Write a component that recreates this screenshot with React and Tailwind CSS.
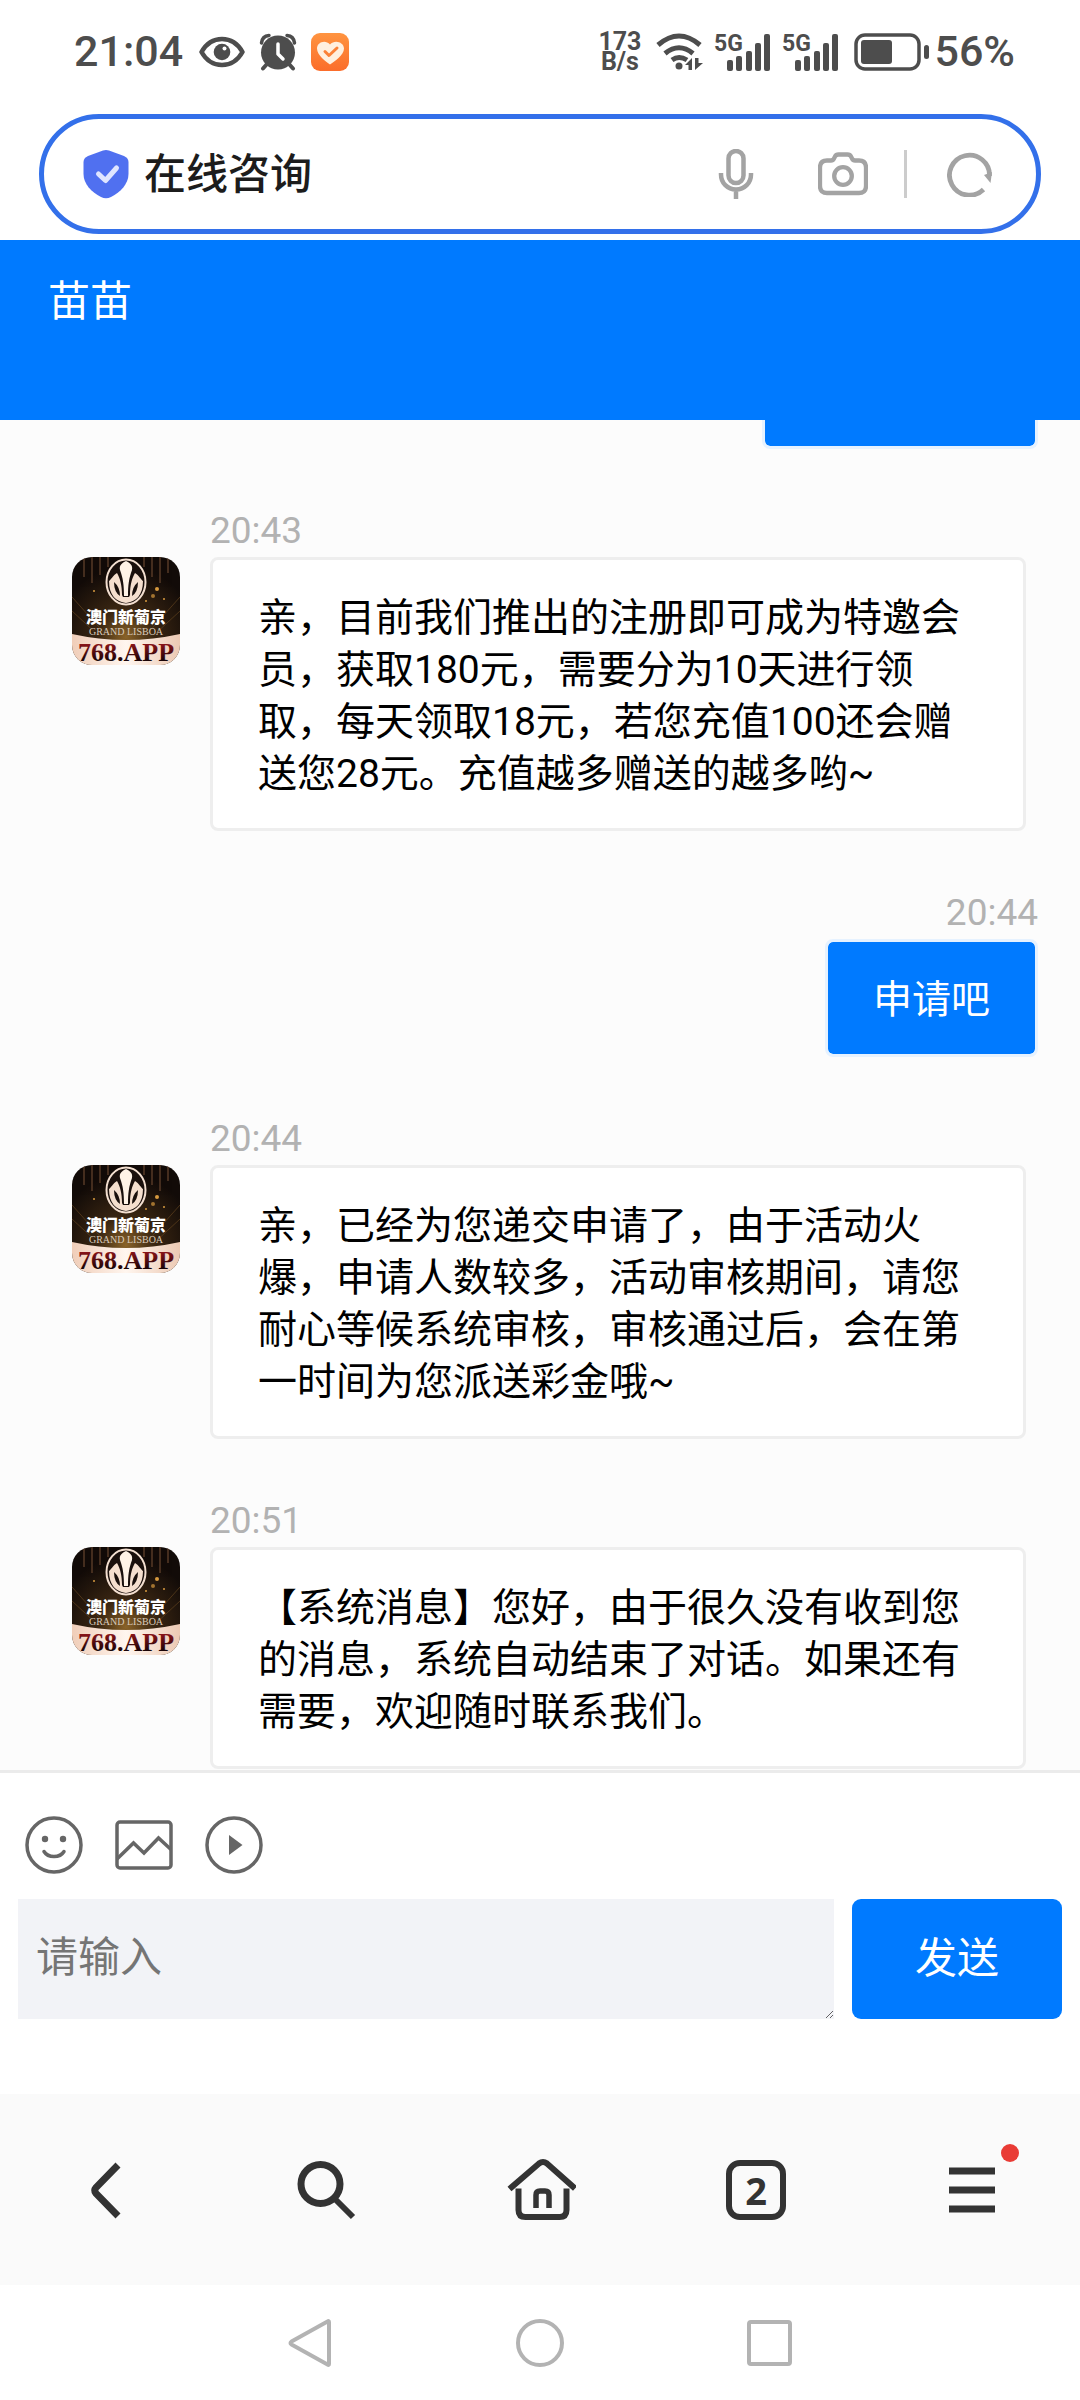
const messages = [
  {
    id: 1,
    from: 'agent',
    time: '20:43',
    text: '亲，目前我们推出的注册即可成为特邀会员，获取180元，需要分为10天进行领取，每天领取18元，若您充值100还会赠送您28元。充值越多赠送的越多哟~',
  },
  { id: 2, from: 'me', time: '20:44', text: '申请吧' },
  {
    id: 3,
    from: 'agent',
    time: '20:44',
    text: '亲，已经为您递交申请了，由于活动火爆，申请人数较多，活动审核期间，请您耐心等候系统审核，审核通过后，会在第一时间为您派送彩金哦~',
  },
  {
    id: 4,
    from: 'agent',
    time: '20:51',
    text: '【系统消息】您好，由于很久没有收到您的消息，系统自动结束了对话。如果还有需要，欢迎随时联系我们。',
  },
];

const Signal = () => (
  <svg viewBox="0 0 58 40" className="h-10 w-[58px] overflow-visible" fill="currentColor">
    <text x="0" y="19" fontSize="23" fontWeight="700" fontFamily="Roboto, sans-serif">5G</text>
    <rect x="13" y="28" width="6" height="11" rx="2" />
    <rect x="22" y="24" width="6" height="15" rx="2" />
    <rect x="32" y="19" width="6" height="20" rx="2" />
    <rect x="41" y="11" width="6" height="28" rx="2" />
    <rect x="50" y="2" width="6" height="37" rx="2" />
  </svg>
);

const StatusBar = () => (
  <div className="flex h-[102px] items-center justify-between pt-px pr-[65px] pl-[74px] text-[43px] font-medium text-[#4d4d4d]">
    <div className="flex items-center">
      <span>21:04</span>
      <svg viewBox="0 0 46 32" className="ml-4 h-8 w-[46px]">
        <path d="M2.500 16C7 8 14 3 23 3s16 5 20.500 13C39 24 32 29 23 29S7 24 2.500 16Z" fill="none" stroke="currentColor" strokeWidth="4.500" strokeLinejoin="round" />
        <circle cx="23" cy="16" r="8.300" fill="currentColor" />
        <circle cx="25.500" cy="12.500" r="2" fill="#fff" />
      </svg>
      <svg viewBox="0 0 38 38" className="ml-[14px] h-[38px] w-[38px]" fill="none" stroke="currentColor">
        <circle cx="19" cy="19.500" r="17" fill="currentColor" stroke="none" />
        <path d="M2.500 10C3 5.500 6 2.800 10 2.500M35.500 10C35 5.500 32 2.800 28 2.500" strokeWidth="3.500" strokeLinecap="round" />
        <path d="M8 31l-4 4.500M30 31l4 4.500" strokeWidth="4" strokeLinecap="round" />
        <path d="M19 11v10l5 5" stroke="#fff" strokeWidth="3.500" strokeLinecap="round" strokeLinejoin="round" />
      </svg>
      <svg viewBox="0 0 38 38" className="ml-[14px] h-[38px] w-[38px]">
        <defs>
          <linearGradient id="health" x1="0" y1="0" x2="0" y2="1">
            <stop offset="0" stopColor="#ff9440" />
            <stop offset="1" stopColor="#fb6d2b" />
          </linearGradient>
        </defs>
        <rect width="38" height="38" rx="9" fill="url(#health)" />
        <path d="M19 31.500C15 29 6 22 6 15.500 6 9 14.500 6 19 11.500 23.500 6 33 9 33 15.500 33 22 23 29 19 31.500Z" fill="#fff0df" />
        <path d="M14 18.500l4 4 8-7.500" fill="none" stroke="#fb8238" strokeWidth="3" strokeLinecap="round" strokeLinejoin="round" />
      </svg>
    </div>
    <div className="flex items-center">
      <div className="text-center text-[25px] leading-5 font-bold">
        <div>173</div>
        <div>B/s</div>
      </div>
      <svg viewBox="0 0 48 40" className="ml-[15px] h-10 w-12" fill="none" stroke="currentColor" strokeWidth="5">
        <path d="M2 13Q23-5 44 13M9 21.500Q23 10 37 21.500M16 28Q23 23 31 28" />
        <circle cx="23" cy="34" r="3.500" fill="currentColor" stroke="none" />
        <path d="M36 26v12h-3.500v-5H29zM39 38V26h3.500v5H47z" fill="currentColor" stroke="none" />
      </svg>
      <span className="ml-[10px]"><Signal /></span>
      <span className="ml-[10px]"><Signal /></span>
      <svg viewBox="0 0 76 38" className="ml-[14px] h-[38px] w-[76px]" fill="currentColor">
        <rect x="2" y="2" width="63" height="34" rx="9" fill="none" stroke="currentColor" strokeWidth="3.500" />
        <rect x="7" y="7" width="31" height="24" rx="3" />
        <rect x="70" y="12" width="5" height="14" rx="2.500" />
      </svg>
      <span className="ml-[4px]">56%</span>
    </div>
  </div>
);

const AddressBar = () => (
  <div className="mx-[39px] mt-3 mb-[6px] flex h-[120px] items-center rounded-full border-[5px] border-[#3370ea] bg-white pr-[43px] pl-[39px]">
    <svg viewBox="0 0 46 50" className="h-[50px] w-[46px]">
      <path d="M20 1.500q3-1 6 0L41 7q4.500 2 4.500 6v12c0 10-8 18-17.500 23q-5 2.500-10 0C8.500 43 .500 35 .500 25V13q0-4 4.500-6Z" fill="#5070f0" />
      <path d="M15.500 25l7 6.500L33.500 19" fill="none" stroke="#dfe5ff" strokeWidth="5" strokeLinecap="round" strokeLinejoin="round" />
    </svg>
    <span className="ml-[15px] flex-1 text-[42px] font-medium text-[#1c1c1c]">在线咨询</span>
    <div className="flex items-center text-[#a3a3a3]">
      <button type="button" aria-label="语音">
        <svg viewBox="0 0 36 50" className="h-[50px] w-9" fill="none" stroke="currentColor" strokeWidth="4.500">
          <rect x="10.500" y="2" width="15" height="32" rx="7.500" />
          <path d="M3 24v1.500C3 34 9.500 40.500 18 40.500S33 34 33 25.500V24M18 40v10" />
        </svg>
      </button>
      <button type="button" aria-label="拍照" className="ml-16">
        <svg viewBox="0 0 50 44" className="h-11 w-[50px]" fill="none" stroke="currentColor" strokeWidth="4.300" strokeLinejoin="round">
          <path d="M9 8.500h4q2 0 3-2l1-2q1-2 3.500-2h9q2.500 0 3.500 2l1 2q1 2 3 2h4q7 0 7 7V34q0 7-7 7H9q-7 0-7-7V15.500q0-7 7-7Z" />
          <circle cx="25" cy="24" r="8.800" />
        </svg>
      </button>
      <span className="ml-9 h-12 w-[3px] bg-[#cccccc]" />
      <button type="button" aria-label="刷新" className="ml-10">
        <svg viewBox="0 0 46 46" className="h-[46px] w-[46px]" fill="none" stroke="currentColor" strokeWidth="4.800">
          <path d="M36.500 38.500A20 20 0 1 1 42.500 25" />
          <path d="M37 24l8-3-1.500 11Z" fill="currentColor" stroke="none" />
        </svg>
      </button>
    </div>
  </div>
);

const Avatar = () => (
  <svg viewBox="0 0 108 108" className="h-[108px] w-[108px] shrink-0 rounded-[20px]">
    <defs>
      <radialGradient id="glow" cx=".5" cy=".74" r=".65">
        <stop offset="0" stopColor="#8a6329" />
        <stop offset=".4" stopColor="#3a2612" />
        <stop offset="1" stopColor="#120b08" />
      </radialGradient>
      <linearGradient id="red" x1="0" y1="0" x2="0" y2="1">
        <stop offset=".2" stopColor="#8a1418" />
        <stop offset=".8" stopColor="#160305" />
      </linearGradient>
      <linearGradient id="base" x1="0" x2="1">
        <stop offset="0" stopColor="#f0cdb8" />
        <stop offset=".5" stopColor="#fff6ef" />
        <stop offset="1" stopColor="#ecc9b3" />
      </linearGradient>
    </defs>
    <rect width="108" height="108" fill="url(#glow)" />
    <path d="M12 0v20M20 0v26M28 0v18M36 0v10M72 0v10M80 0v20M88 0v26M96 0v16" stroke="#5a3c28" strokeWidth="2" opacity=".7" />
    <path d="M0 40l34 38M0 54l26 24M108 40L74 78M108 54L82 78" stroke="#6b4a22" strokeWidth="1" opacity=".6" />
    <g fill="#d79a3f">
      <circle cx="85" cy="32" r="2" />
      <circle cx="81" cy="39" r="2" opacity=".7" />
      <circle cx="92" cy="42" r="1" />
      <circle cx="22" cy="34" r="1" />
      <circle cx="36" cy="30" r="1" />
      <circle cx="74" cy="44" r="1" />
    </g>
    <ellipse cx="54" cy="25" rx="19.500" ry="22.500" fill="#1a100c" stroke="#f3dfd0" strokeWidth="2" />
    {/* lotus */}
    <path d="M37 24c2-1 4-6 8-8 3 5 5 12 5 22l1 2h6l1-2c0-10 2-17 5-22 4 2 6 7 8 8 0 14-7 21-17 22-10-1-17-8-17-22Z" fill="#f5dfce" />
    <path d="M54 4c4 2 7 4 6 9-3 8-4 15-4 26h-4c0-11-1-18-4-26-1-5 2-7 6-9Z" fill="#fff3e6" />
    <path d="M42 25q6 5 6 14-6-4-6-14ZM66 25q-6 5-6 14 6-4 6-14Z" fill="#1a100c" />
    <path d="M0 77q54 12 108 0v31H0Z" fill="url(#base)" />
    <text x="54" y="65.500" textAnchor="middle" fontSize="16" fontWeight="900" fill="#fff" fontFamily="'Noto Sans CJK SC', sans-serif">澳门新葡京</text>
    <text x="54" y="77.500" textAnchor="middle" fontSize="10" fill="#d9cbbb" fontFamily="'Liberation Serif', serif">GRAND LISBOA</text>
    <text x="54" y="104" textAnchor="middle" fontSize="26" fontWeight="700" fill="url(#red)" fontFamily="'Liberation Serif', serif">768.APP</text>
  </svg>
);

const Message = ({ from, time, text }) => {
  if (from === 'me') {
    return (
      <div className="flex flex-col items-end pr-[42px]">
        <time className="pt-[6px] text-[37px] leading-[52px] text-[#b2b2b2]">{time}</time>
        <p className="rounded-lg border-[3px] border-[#e6f2ff] bg-[#007aff] bg-clip-padding px-[45px] pt-8 pb-7 text-[39px] leading-[52px] text-white">{text}</p>
      </div>
    );
  }
  return (
    <div className="pr-[54px] pl-[72px]">
      <time className="block pt-[6px] pl-[138px] text-[37px] leading-[52px] text-[#b2b2b2]">{time}</time>
      <div className="flex items-start gap-[30px]">
        <Avatar />
        <p className="flex-1 rounded-lg border-[3px] border-[#eeeeee] bg-white px-[45px] pt-8 pb-7 text-[39px] leading-[52px] text-black">{text}</p>
      </div>
    </div>
  );
};

const Composer = () => (
  <form className="border-t-[3px] border-[#ebebeb] bg-white px-[18px] pt-[43px] pb-[75px]" onSubmit={(e) => e.preventDefault()}>
    <div className="mb-[25px] flex gap-8 pl-[7px] text-[#666666]">
      <button type="button" aria-label="表情">
        <svg viewBox="0 0 58 58" className="h-[58px] w-[58px]" fill="none" stroke="currentColor" strokeWidth="3.500">
          <circle cx="29" cy="29" r="27" />
          <path d="M19 35.500Q22 40.500 29 40.500T39 35.500" strokeLinecap="round" />
          <g fill="currentColor" stroke="none">
            <circle cx="20" cy="23" r="3.200" />
            <circle cx="38" cy="23" r="3.200" />
          </g>
        </svg>
      </button>
      <button type="button" aria-label="图片">
        <svg viewBox="0 0 58 58" className="h-[58px] w-[58px]" fill="none" stroke="currentColor" strokeWidth="3.500">
          <rect x="2" y="6" width="54" height="46" rx="3" />
          <path d="M2 43l16.500-16L29 37l14.500-15L56 33.500" />
        </svg>
      </button>
      <button type="button" aria-label="视频">
        <svg viewBox="0 0 58 58" className="h-[58px] w-[58px]" fill="none" stroke="currentColor" strokeWidth="3.500">
          <circle cx="29" cy="29" r="27" />
          <path d="M24 19v20l13.500-10Z" fill="currentColor" stroke="none" />
        </svg>
      </button>
    </div>
    <div className="flex items-start gap-[18px]">
      <textarea
        aria-label="请输入"
        placeholder="请输入"
        className="h-[120px] min-w-0 flex-1 bg-[#f2f3f7] px-[18px] pt-[29px] pb-6 text-[42px] leading-[60px] outline-none placeholder:text-[#757575]"
      />
      <button type="submit" className="h-[120px] w-[210px] rounded-[9px] bg-[#007aff] pb-px text-[42px] leading-[60px] text-white">
        发送
      </button>
    </div>
  </form>
);

const BrowserNav = () => (
  <nav className="grid h-[191px] grid-cols-5 place-items-center bg-[#fafafa] text-[#333333]">
    <button type="button" aria-label="后退">
      <svg viewBox="0 0 72 72" className="h-[72px] w-[72px]" fill="none" stroke="currentColor" strokeWidth="7">
        <path d="M46 11L24 33.500Q21.500 36.500 24 39.500L46 62" />
      </svg>
    </button>
    <button type="button" aria-label="搜索">
      <svg viewBox="0 0 72 72" className="h-[72px] w-[72px]" fill="none" stroke="currentColor">
        <circle cx="32.500" cy="30" r="19.500" strokeWidth="7" />
        <path d="M46 44l19 19" strokeWidth="6" />
      </svg>
    </button>
    <button type="button" aria-label="主页">
      <svg viewBox="0 0 72 72" className="h-[72px] w-[72px]" fill="none" stroke="currentColor" strokeWidth="6">
        <path d="M5.500 35L35 9.500q4-3 8 0L71 34.500" />
        <path d="M14.500 34.500V56q0 7 7 7h34q7 0 7-7V34.500" />
        <path d="M32 54V41q0-4 4-4h5q4 0 4 4v13" strokeWidth="5.500" />
      </svg>
    </button>
    <button type="button" aria-label="标签页" className="flex h-[60px] w-[60px] items-center justify-center rounded-[14px] border-6 border-[#333333] font-['Open_Sans'] text-[38px] leading-none font-bold">
      2
    </button>
    <button type="button" aria-label="菜单" className="relative">
      <svg viewBox="0 0 46 72" className="h-[72px] w-[46px]" fill="currentColor">
        <path d="M0 13.500h46v7H0zM0 32.500h46v7H0zM0 51.500h46v7H0z" />
      </svg>
      <span className="absolute -top-[10px] -right-6 h-[18px] w-[18px] rounded-full bg-[#e93b35]" />
    </button>
  </nav>
);

const SystemNav = () => (
  <nav className="flex h-[115px] items-center justify-center gap-[182px] bg-white text-[#b3b3b3]">
    <button type="button" aria-label="返回">
      <svg viewBox="0 0 48 48" className="h-12 w-12" fill="none" stroke="currentColor" strokeWidth="4" strokeLinejoin="round">
        <path d="M43 3Q43 1.500 41.500 2.500L5.500 22.500Q3.500 24 5.500 25.500L41.500 45.500Q43 46.500 43 45Z" />
      </svg>
    </button>
    <button type="button" aria-label="桌面">
      <svg viewBox="0 0 48 48" className="h-12 w-12" fill="none" stroke="currentColor" strokeWidth="4">
        <circle cx="24" cy="24" r="22" />
      </svg>
    </button>
    <button type="button" aria-label="最近任务">
      <svg viewBox="0 0 48 48" className="h-12 w-12" fill="none" stroke="currentColor" strokeWidth="4">
        <rect x="3" y="3" width="41" height="42" rx="2" />
      </svg>
    </button>
  </nav>
);

export default function App() {
  return (
    <div className="flex min-h-screen flex-col bg-white font-[Roboto,'Noto_Sans_CJK_SC',sans-serif]">
      <StatusBar />
      <AddressBar />
      <header className="h-[180px] bg-[#007aff] px-12 pt-8">
        <h1 className="text-[42px] leading-[60px] text-white">苗苗</h1>
      </header>
      <main className="flex flex-1 flex-col gap-[50px] bg-[#fcfcfc] pb-px">
        {/* bottom edge of the message scrolled under the header */}
        <div className="mr-[42px] h-[29px] w-[276px] self-end rounded-b-lg border-x-[3px] border-b-[3px] border-[#e6f2ff] bg-[#007aff] bg-clip-padding" />
        {messages.map((m) => (
          <Message key={m.id} from={m.from} time={m.time} text={m.text} />
        ))}
      </main>
      <Composer />
      <BrowserNav />
      <SystemNav />
    </div>
  );
}
